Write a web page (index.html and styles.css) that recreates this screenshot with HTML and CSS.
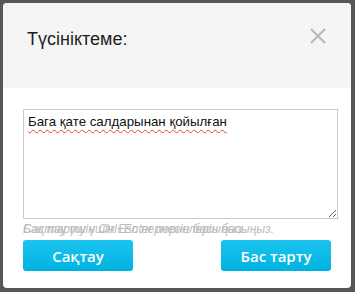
FILE: index.html
```html
<!DOCTYPE html>
<html lang="kk">
<head>
    <meta charset="UTF-8" />
    <meta name="viewport" content="width=device-width, initial-scale=1.0" />
    <title>Түсініктеме</title>
    <link rel="stylesheet" href="styles.css">
</head>
<body>
    <div class="modal">
        <div class="modal-header">
            <h2>Түсініктеме:</h2>
            <button class="close" type="button">
                <svg width="16" height="16" viewBox="0 0 16 16"><path d="M1 1L15 15M15 1L1 15" stroke="#b8b8b8" stroke-width="2"/></svg>
            </button>
        </div>
        <div class="modal-body">
            <textarea class="comment" spellcheck="false">Бага қате салдарынан қойылған</textarea>
            <!-- two hints drawn on top of each other -->
            <div class="hints">
                <span class="hint">Сақтау үшін Ctrl+Enter пернелерін басыңыз.</span>
                <span class="hint">Бас тарту үшін Esc пернесін басыңыз.</span>
            </div>
            <div class="btns">
                <button type="button">Сақтау</button>
                <button type="button">Бас тарту</button>
            </div>
        </div>
    </div>
</body>
</html>
```

FILE: styles.css
```css
body {
    margin: 0;
    background: #575757;
    font-family: "Liberation Sans", Arial, sans-serif;
    height: 292px;
    overflow: hidden;
}
.modal {
    margin: 3px 4px 0 3px;
    width: 348px;
    height: 285px;
    background: #fff;
    border-radius: 4px;
    overflow: hidden;
}
.modal-header {
    height: 85px;
    background: #f5f5f5;
    display: flex;
    align-items: flex-start;
    justify-content: space-between;
    padding: 0 24px 0 24px;
    box-sizing: border-box;
}
.modal-header h2 {
    margin: 25px 0 0 0;
    font-size: 18px;
    line-height: 23px;
    font-weight: normal;
    color: #1e1e1e;
}
.close {
    margin-top: 25px;
    margin-right: 1px;
    border: 0;
    padding: 0;
    background: none;
    width: 16px;
    height: 16px;
    cursor: pointer;
}
.close svg {
    display: block;
}
.modal-body {
    padding: 21px 0 0 20px;
}
.comment {
    display: block;
    width: 315px;
    height: 110px;
    box-sizing: border-box;
    border: 1px solid #ccc;
    padding: 4px 4px;
    font-family: "Liberation Sans", Arial, sans-serif;
    font-size: 13.3px;
    color: #111;
    resize: vertical;
    outline: none;
    text-decoration: underline wavy #f04040;
    text-decoration-thickness: 1px;
    text-underline-offset: 3px;
}
.hints {
    display: grid;
    height: 17px;
    margin-top: 2px;
}
.hint {
    grid-area: 1 / 1;
    font-size: 12px;
    line-height: 17px;
    font-style: italic;
    color: #bbb;
    white-space: nowrap;
}
.btns {
    display: flex;
    justify-content: space-between;
    width: 308px;
    margin-top: 2px;
}
.btns button {
    width: 110px;
    height: 31px;
    border: 0;
    border-radius: 3px;
    background: linear-gradient(#1cc4ee, #00b2e2);
    color: #fff;
    font-family: "Open Sans", sans-serif;
    font-weight: 600;
    font-size: 15px;
    cursor: pointer;
}
```
